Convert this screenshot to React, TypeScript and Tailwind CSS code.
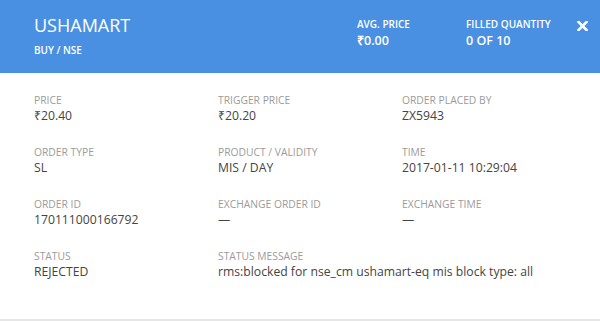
const fields = [
  { label: 'Price', value: '₹20.40' },
  { label: 'Trigger price', value: '₹20.20' },
  { label: 'Order placed by', value: 'ZX5943' },
  { label: 'Order type', value: 'SL' },
  { label: 'Product / Validity', value: 'MIS / DAY' },
  { label: 'Time', value: '2017-01-11 10:29:04' },
  { label: 'Order ID', value: '170111000166792' },
  { label: 'Exchange order ID', value: '—' },
  { label: 'Exchange time', value: '—' },
  { label: 'Status', value: 'REJECTED' },
  { label: 'Status message', value: 'rms:blocked for nse_cm ushamart-eq mis block type: all' },
];

export default function App() {
  return (
    <div className="w-[600px] h-[321px] bg-white border-b-2 border-[#e6e6e6] font-['Open_Sans',sans-serif]">
      <div className="h-[73px] bg-[#4a90e2] text-white flex items-start pl-[34px] pr-[12px]">
        <div className="w-[323px] shrink-0 pt-[15px]">
          <div className="text-[18px] leading-[20px]">USHAMART</div>
          <div className="text-[10px] leading-[12px] font-semibold mt-[9px]">BUY / NSE</div>
        </div>
        <div className="w-[109px] shrink-0 pt-[18px]">
          <div className="text-[10px] leading-[12px] font-semibold">AVG. PRICE</div>
          <div className="text-[12.5px] leading-[16px] font-semibold mt-[3px]">₹0.00</div>
        </div>
        <div className="w-[111px] shrink-0 pt-[18px]">
          <div className="text-[10px] leading-[12px] font-semibold">FILLED QUANTITY</div>
          <div className="text-[12.5px] leading-[16px] font-semibold mt-[3px]">0 OF 10</div>
        </div>
        <button className="pt-[21px]">
          <svg width="11" height="10" viewBox="0 0 11 10">
            <path d="M1.5 1L9.5 9M9.5 1L1.5 9" stroke="white" strokeWidth="2.6" strokeLinecap="square" />
          </svg>
        </button>
      </div>
      <div className="grid grid-cols-[184px_184px_184px] gap-y-[23px] px-[34px] pt-[21px]">
        {fields.map((f) => (
          <div key={f.label} className={f.label === 'Status message' ? 'col-span-2' : ''}>
            <div className="text-[10.3px] leading-[12px] uppercase text-[#9b9b9b]">{f.label}</div>
            <div className="text-[12.2px] leading-[14px] text-[#444444] whitespace-nowrap mt-[3px]">{f.value}</div>
          </div>
        ))}
      </div>
    </div>
  );
}
